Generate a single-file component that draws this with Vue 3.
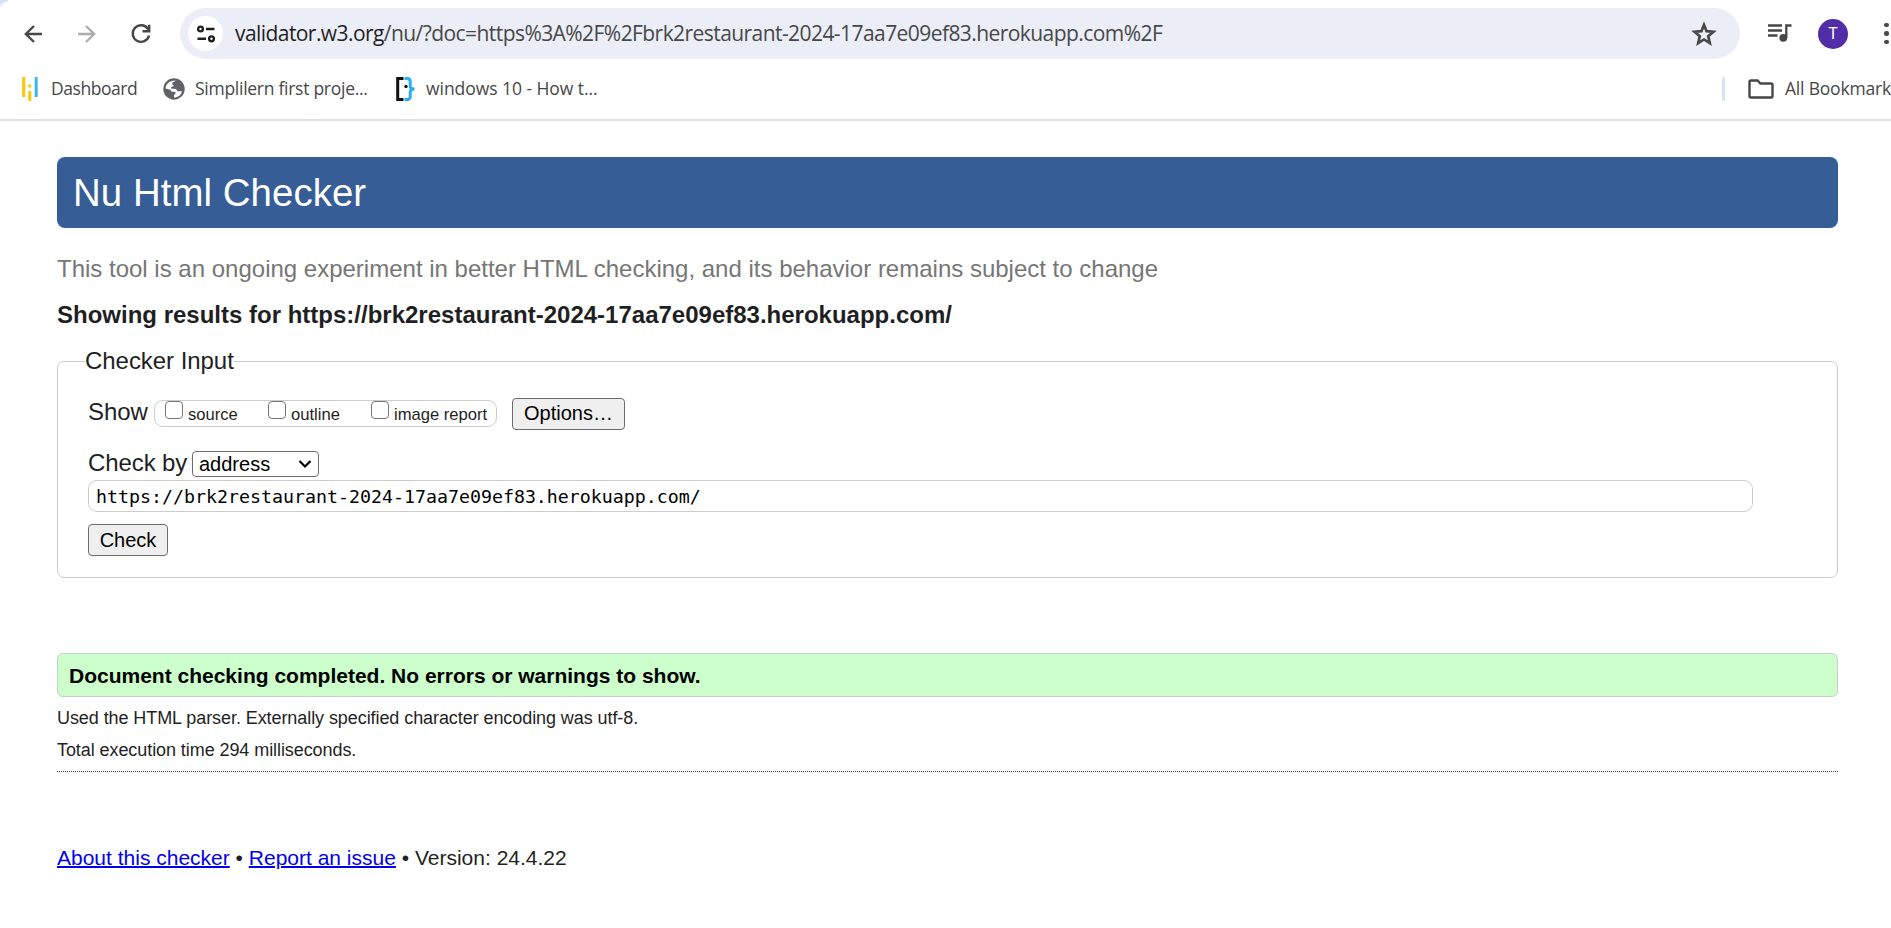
<script setup>
const bookmarkTitles = ['Dashboard', 'Simplilern first proje...', 'windows 10 - How t...']
const options = ['source', 'outline', 'image report']
</script>

<template>
  <div class="window">
    <header class="chrome">
      <div class="corner"></div>
      <div class="toolbar">
        <svg class="nav back" viewBox="0 0 24 24"><path d="M21 12H4.500M13 4l-8.200 8 8.200 8" /></svg>
        <svg class="nav forward" viewBox="0 0 24 24"><path d="M3 12H19.500M11 4l8.200 8-8.200 8" /></svg>
        <svg class="nav reload" viewBox="0 0 24 24"><path d="M19.300 7.500A8.300 8.300 0 1 0 20.100 13.500M20.200 2.800v6.400h-6.700" /></svg>
        <div class="omnibox">
          <span class="site-info">
            <svg viewBox="0 0 20 20"><circle cx="4.500" cy="5" r="2.400" /><path d="M10 5h8.500M1.500 14.800H10" /><circle cx="15.500" cy="14.800" r="2.400" /></svg>
          </span>
          <span class="url"><b>validator.w3.org</b>/nu/?doc=https%3A%2F%2Fbrk2restaurant-2024-17aa7e09ef83.herokuapp.com%2F</span>
          <svg class="star" viewBox="0 0 24 24"><path d="m12 4.200 2.200 5.400 5.900.5-4.500 3.900 1.400 5.800L12 16.700l-5 3.100 1.400-5.800-4.500-3.900 5.900-.5z" /></svg>
        </div>
        <svg class="queue" viewBox="0 0 24 18"><path d="M0 1.500h14M0 6.500h14M0 11.500h9.500M18.300 14V1.500h5.200" /><circle cx="15.300" cy="13.800" r="3.900" /></svg>
        <span class="avatar">T</span>
        <span class="kebab"><i></i><i></i><i></i></span>
      </div>
      <div class="bookmarks">
        <svg class="fav f1" viewBox="0 0 16 24"><path stroke="#fdc500" d="M1.700 0v20M7.800 14v10M7.800 7.500v3" /><path stroke="#3fb3ee" d="M14.200 0v20" /></svg>
        <span class="bm b1">{{ bookmarkTitles[0] }}</span>
        <svg class="fav f2" viewBox="0 0 22 22"><circle cx="11" cy="11" r="10.700" fill="#5f6368" /><path fill="#fff" d="M12.500 2.600c-.7 1.500-3.200 1.500-3.400 2.900-.1 1.200 1.700 1.300 1.500 2.300-.2 1.100-2.600.6-2.600 1.900 0 1 1.500 1 3.300 1 1.800.1 3 1.300 3 2.600h4.600C18.200 17.200 15 19.600 11 19.600v-2.100c0-1.200 1.700-1.300 1.700-2.400 0-1-1-1.300-2.600-1.300-1.700 0-2.400-.9-2.600-2.100L2.600 10.500C3 6 6.800 2.300 12.500 2.600" /></svg>
        <span class="bm b2">{{ bookmarkTitles[1] }}</span>
        <svg class="fav f3" viewBox="0 0 20 24"><path stroke="#111" d="M7.500 1.400H1.700v21.200h5.800" /><path stroke="#29b0ea" d="M8.500 1.400h2.500q3.200 0 3.200 3v4.500q0 3 4.300 3-4.300 0-4.300 3v4.700q0 3-3.200 3H8.500" /><circle cx="10" cy="9.500" r="1.700" fill="#111" /></svg>
        <span class="bm b3">{{ bookmarkTitles[2] }}</span>
        <span class="divider"></span>
        <svg class="folder" viewBox="0 0 26 20"><path d="M3 1.500h6.500L12.500 4.500H23q1.500 0 1.500 1.500v11q0 1.500-1.500 1.500H3q-1.500 0-1.500-1.500V3Q1.500 1.500 3 1.500z" /></svg>
        <span class="bm b4">All Bookmarks</span>
      </div>
    </header>

    <main>
      <h1><span>Nu Html Checker</span></h1>
      <p class="note"><span>This tool is an ongoing experiment in better HTML checking, and its behavior remains subject to change</span></p>
      <h2><span>Showing results for https://brk2restaurant-2024-17aa7e09ef83.herokuapp.com/</span></h2>
      <form class="panel" @submit.prevent>
        <div class="legend">Checker Input</div>
        <div class="show-row">
          <span class="label">Show</span>
          <div class="pill">
            <label v-for="o in options" :key="o"><i class="box"></i><span>{{ o }}</span></label>
          </div>
          <button class="btn options" type="button">Options…</button>
        </div>
        <div class="by-row">
          <span class="label">Check by</span>
          <div class="select"><span>address</span><svg viewBox="0 0 14 10"><path d="m1.500 2 5.500 5.500L12.500 2" /></svg></div>
        </div>
        <div class="address">https://brk2restaurant-2024-17aa7e09ef83.herokuapp.com/</div>
        <button class="btn check" type="button">Check</button>
      </form>
      <p class="success">Document checking completed. No errors or warnings to show.</p>
      <p class="detail">Used the HTML parser. Externally specified character encoding was utf-8.</p>
      <p class="detail">Total execution time 294 milliseconds.</p>
      <hr />
      <footer><a>About this checker</a> • <a>Report an issue</a> • Version: 24.4.22</footer>
    </main>
  </div>
</template>

<style>
body { margin: 0; background: #fff; overflow: hidden; }
</style>

<style scoped>
* { box-sizing: border-box; }
.window { width: 1891px; height: 928px; overflow: hidden; background: #fff; color: #1f1f23; font-family: "Liberation Sans", Arial, sans-serif; white-space: nowrap; }
.chrome { position: relative; height: 121px; border-bottom: 2px solid #e0e0e0; font-family: "Open Sans", "Noto Sans", sans-serif; color: #474747; }
.corner { position: absolute; left: 0; top: 0; width: 8px; height: 10px; background: radial-gradient(circle at 100% 100%, #fff 8px, #d3e3fd 9px); }
.toolbar { display: flex; align-items: center; height: 51px; margin-top: 8px; }
.chrome::before { content: ""; display: table; }
.nav { width: 24px; height: 24px; fill: none; stroke: #474747; stroke-width: 2.400; flex: none; }
.back { margin-left: 21px; }
.forward { margin-left: 30px; stroke: #acacac; }
.reload { margin-left: 30px; }
.omnibox { display: flex; align-items: center; flex: none; width: 1560px; height: 51px; margin-left: 27px; padding-left: 8px; border-radius: 26px; background: #ebeef7; }
.site-info { display: flex; align-items: center; justify-content: center; width: 35px; height: 35px; border-radius: 50%; background: #fff; }
.site-info svg { width: 20px; height: 20px; fill: none; stroke: #1f1f1f; stroke-width: 2.400; }
.url { margin: -1px 0 0 12px; width: 1448px; font-size: 21px; letter-spacing: -0.567px; color: #474747; }
.url b { font-weight: 400; color: #1f1f1f; }
.star { width: 28px; height: 28px; margin-left: 7px; fill: none; stroke: #474747; stroke-width: 2.300; }
.queue { flex: none; width: 24px; height: 18px; margin: -2px 0 0 28px; fill: none; stroke: #474747; stroke-width: 2.300; }
.queue circle { fill: #474747; stroke: none; }
.avatar { flex: none; width: 30px; height: 30px; margin-left: 26px; border-radius: 50%; background: #512da8; color: #fff; font: 16px/30px Roboto, sans-serif; text-align: center; }
.kebab { display: flex; flex-direction: column; gap: 4px; margin-left: 36px; }
.kebab i { width: 4.500px; height: 4.500px; border-radius: 50%; background: #474747; }
.bookmarks { display: flex; align-items: center; height: 60px; font-size: 17.500px; }
.fav { flex: none; fill: none; stroke-width: 3; }
.f1 { width: 16px; height: 24px; margin-left: 22px; }
.f2 { width: 22px; height: 22px; margin-left: 25px; }
.f3 { width: 20px; height: 24px; margin-left: 28px; }
.bm { display: block; flex: none; margin-top: -2px; }
.b1 { width: 87px; margin-left: 13px; letter-spacing: -0.450px; }
.b2 { width: 173px; margin-left: 10px; letter-spacing: -0.270px; }
.b3 { width: 172px; margin-left: 10px; letter-spacing: -0.050px; }
.b4 { margin-left: 11px; letter-spacing: -0.200px; }
.divider { flex: none; width: 3px; height: 24px; margin-left: 1124px; background: #d3e3fd; border-radius: 2px; }
.folder { flex: none; width: 26px; height: 20px; margin-left: 23px; fill: none; stroke: #474747; stroke-width: 2.400; }
main { width: 1781px; margin: 36px 0 0 57px; }
h1, h2, p, hr { margin: 0; }
h1 { height: 71px; padding-left: 16px; border-radius: 8px; background: #365d95; color: #fff; font-size: 38.400px; font-weight: 400; letter-spacing: 0.060px; line-height: 71px; }
.note { margin-top: 25px; font-size: 24px; line-height: 32px; color: #767676; }
h2 { margin-top: 14px; font-size: 24px; line-height: 32px; }
.panel { height: 217px; margin-top: 30px; padding-left: 30px; border: 1px solid #ccc; border-radius: 7px; }
.legend { width: 149px; height: 32px; margin: -17px 0 0 -3px; background: #fff; font-size: 24px; letter-spacing: -0.050px; line-height: 32px; }
.show-row { display: flex; height: 32px; margin-top: 21px; }
.label { font-size: 24px; letter-spacing: -0.100px; line-height: 28px; }
.show-row .label { width: 66px; }
.pill { display: flex; width: 343px; height: 27px; margin-top: 2px; border: 1px solid #ccc; border-radius: 9px; font-size: 16.600px; line-height: 27px; }
.pill label { display: flex; width: 103px; padding-left: 10px; }
.box { flex: none; width: 18px; height: 18px; margin-right: 5px; border: 1.500px solid #767676; border-radius: 4px; background: #fff; }
.btn { display: block; height: 32px; padding: 0; border: 1px solid #6b6b6b; border-radius: 4px; background: #efefef; color: #000; font: 20px/28px "Liberation Sans", Arial, sans-serif; }
.options { width: 113px; margin-left: 15px; padding-bottom: 2px; }
.by-row { display: flex; height: 26px; margin-top: 21px; }
.by-row .label { width: 104px; line-height: 24px; }
.select { display: flex; align-items: center; width: 127px; height: 26px; padding-left: 6px; border: 1px solid #6b6b6b; border-radius: 4px; color: #000; font-size: 20px; }
.select span { width: 99px; }
.select svg { width: 14px; height: 10px; fill: none; stroke: #000; stroke-width: 2.200; }
.address { width: 1665px; height: 32px; margin-top: 3px; padding-left: 7px; border: 1px solid #ccc; border-radius: 9px; color: #000; font: 18.270px/32px "DejaVu Sans Mono", monospace; }
.check { width: 80px; margin-top: 12px; }
.success { height: 44px; margin-top: 75px; padding-left: 11px; border: 1px solid #ccc; border-radius: 6px; background: #cfc; color: #000; font-size: 21px; font-weight: 700; line-height: 44px; }
.detail { height: 32px; font-size: 18px; letter-spacing: -0.076px; line-height: 32px; }
.success + .detail { margin-top: 5px; }
hr { margin-top: 5px; border: 0; border-top: 1px dotted #444; }
footer { margin-top: 70px; font-size: 21px; line-height: 32px; }
footer a { color: #00e; text-decoration: underline; text-decoration-thickness: 2px; }
</style>
